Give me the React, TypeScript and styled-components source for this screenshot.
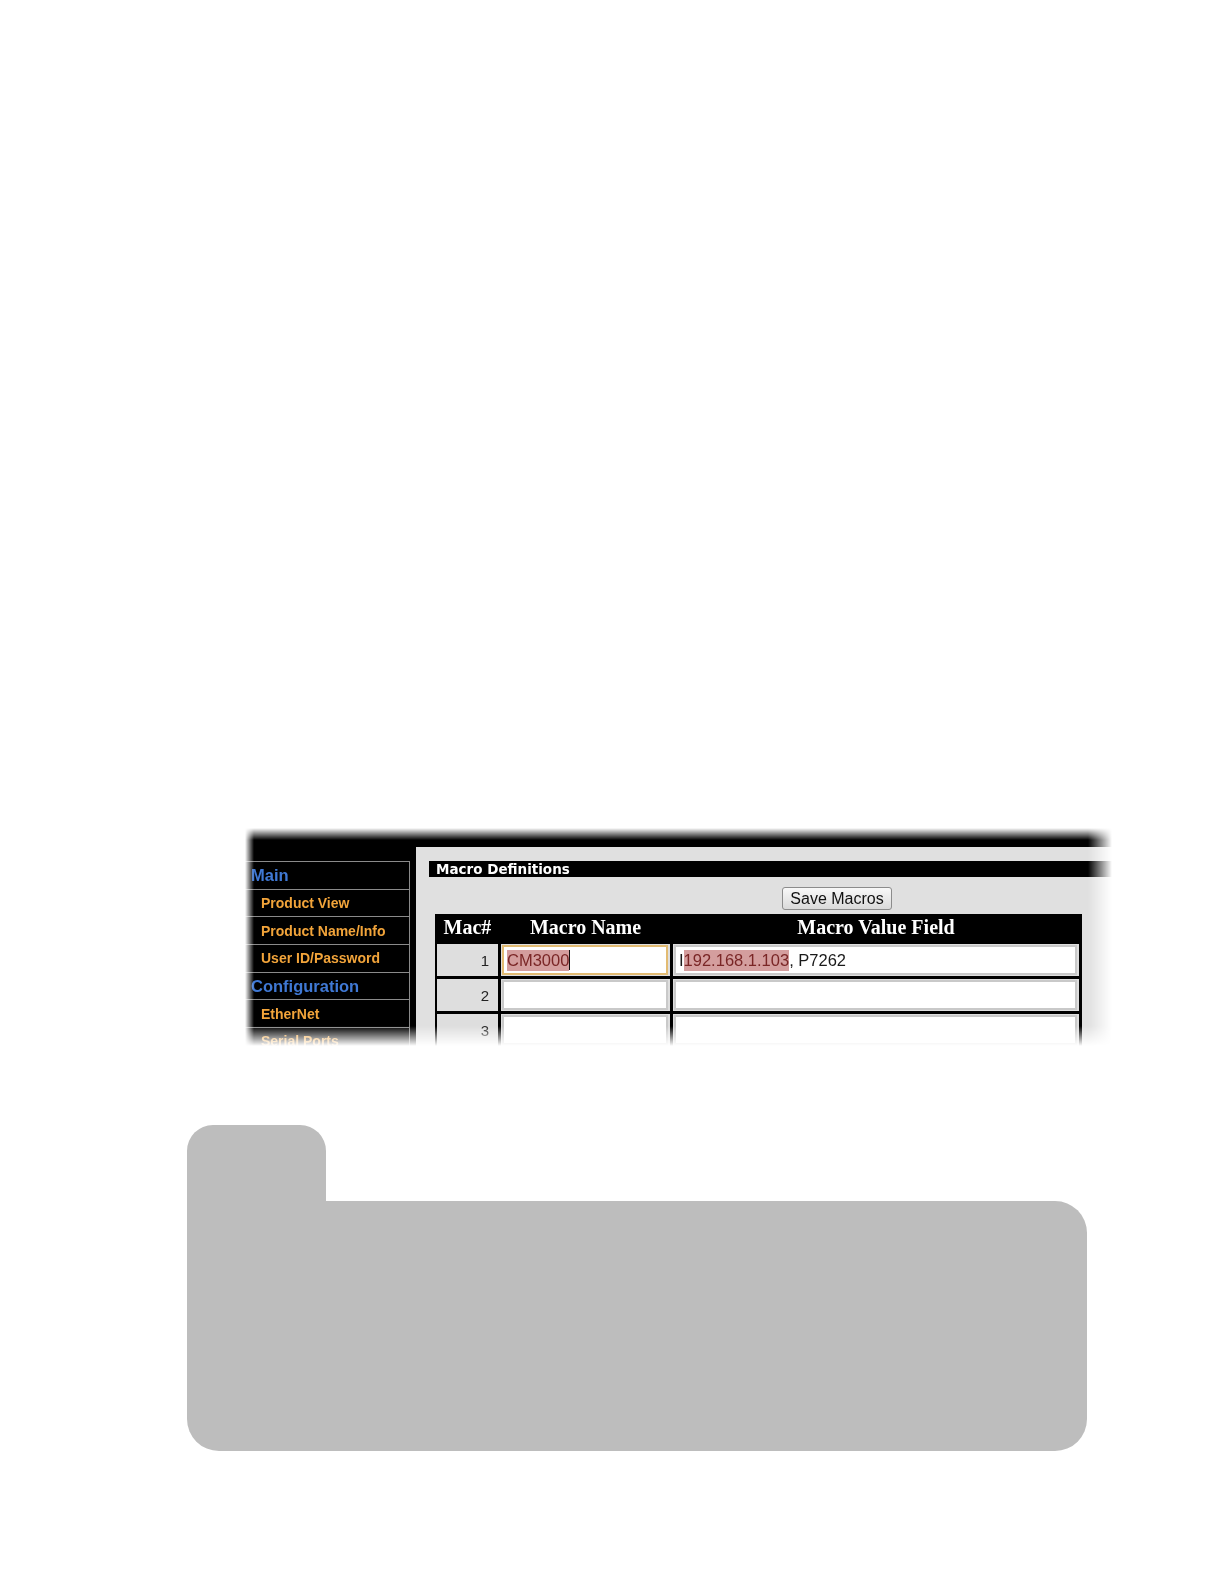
import React from 'react'
import styled, { createGlobalStyle } from 'styled-components'

const GlobalStyle = createGlobalStyle`
  html, body {
    margin: 0;
    padding: 0;
    background: #ffffff;
  }
  body {
    font-family: "Liberation Sans", Arial, sans-serif;
  }
`

const menu = [
  { label: 'Main', header: true },
  { label: 'Product View' },
  { label: 'Product Name/Info' },
  { label: 'User ID/Password' },
  { label: 'Configuration', header: true },
  { label: 'EtherNet' },
  { label: 'Serial Ports' },
]

const fadeX = 'linear-gradient(to right, transparent 0, #000 9px, #000 calc(100% - 24px), transparent 100%)'
const fadeY = 'linear-gradient(to bottom, transparent 0, #000 12px, #000 calc(100% - 20px), transparent 100%)'

const Page = styled.div`
  width: 1224px;
  height: 1584px;
  display: flex;
  flex-direction: column;
  padding-top: 828px;
  box-sizing: border-box;
`

const Shot = styled.div`
  margin-left: 245px;
  width: 867px;
  height: 218px;
  overflow: hidden;
  display: grid;
  grid-template-columns: 171px 1fr;
  grid-template-rows: 19px 1fr;
  background: #000;
  -webkit-mask-image: ${fadeX}, ${fadeY};
  -webkit-mask-composite: source-in;
  mask-image: ${fadeX}, ${fadeY};
  mask-composite: intersect;
`

const TopBar = styled.div`
  grid-column: 1 / 3;
  background: #000;
`

const Sidebar = styled.nav`
  background: #000;
  padding-top: 14px;
`

const MenuItem = styled.div<{ $header?: boolean }>`
  width: 165px;
  height: 27.7px;
  box-sizing: border-box;
  border-top: 1px solid #8a8a8a;
  border-right: 1px solid #8a8a8a;
  display: flex;
  align-items: center;
  padding-left: ${(p) => (p.$header ? '6px' : '16px')};
  font-family: "Liberation Sans", Arial, sans-serif;
  font-weight: bold;
  font-size: ${(p) => (p.$header ? '16.5px' : '14px')};
  color: ${(p) => (p.$header ? '#3f78d4' : '#f2a43a')};
  white-space: nowrap;
`

const Content = styled.main`
  background: #e0e0e0;
  padding: 14px 0 0 13px;
  display: flex;
  flex-direction: column;
`

const SectionBar = styled.div`
  height: 16px;
  background: #000;
  color: #fff;
  font-family: "DejaVu Sans", Verdana, sans-serif;
  font-weight: bold;
  font-size: 13.5px;
  line-height: 16px;
  padding-left: 7px;
  white-space: nowrap;
`

const ButtonRow = styled.div`
  display: flex;
  padding: 10px 0 4px 353px;
`

const SaveButton = styled.button`
  width: 110px;
  height: 23px;
  padding: 0;
  font-family: "Liberation Sans", Arial, sans-serif;
  font-size: 16px;
  color: #111;
  background: linear-gradient(#f8f8f8, #dadada);
  border: 1px solid #8c8c8c;
  border-radius: 3px;
`

const Table = styled.div`
  margin-left: 6px;
  width: 647px;
  display: grid;
  grid-template-columns: 61px 169px 1fr;
  column-gap: 3px;
  row-gap: 3px;
  background: #000;
  padding: 0 3px 3px 2px;
  box-sizing: border-box;
`

const HeadCell = styled.div`
  height: 27px;
  display: flex;
  align-items: center;
  justify-content: center;
  font-family: "Liberation Serif", "Times New Roman", serif;
  font-weight: bold;
  font-size: 20px;
  color: #fff;
`

const NumCell = styled.div`
  height: 32px;
  background: #dedede;
  display: flex;
  align-items: center;
  justify-content: flex-end;
  padding-right: 9px;
  font-size: 15px;
  color: #222;
`

const InputCell = styled.div`
  height: 32px;
  background: #dedede;
  padding: 1px 2px 1px 1px;
  box-sizing: border-box;
  display: flex;
`

const Field = styled.div<{ $focused?: boolean }>`
  flex: 1;
  background: #fff;
  border: 2px solid ${(p) => (p.$focused ? '#e2bb72' : '#c9c9c9')};
  box-sizing: border-box;
  display: flex;
  align-items: center;
  padding-left: 3px;
  font-family: "Liberation Sans", Arial, sans-serif;
  font-size: 16.5px;
  color: #1a1a1a;
  white-space: pre;
`

const Selected = styled.span`
  background: #d49e9e;
  color: #7a2626;
  line-height: 21px;
`

const Caret = styled.span`
  display: inline-block;
  width: 1px;
  height: 20px;
  background: #111;
`

const Shape = styled.div`
  margin-top: 79px;
  margin-left: 187px;
  display: flex;
  flex-direction: column;
`

const Tab = styled.div`
  width: 139px;
  height: 76px;
  background: #bdbdbd;
  border-radius: 26px 26px 0 0;
`

const Body = styled.div`
  width: 900px;
  height: 250px;
  background: #bdbdbd;
  border-radius: 0 32px 32px 32px;
`

export default function App() {
  return (
    <>
      <GlobalStyle />
      <Page>
        <Shot>
          <TopBar />
          <Sidebar>
            {menu.map((m) => (
              <MenuItem key={m.label} $header={m.header}>
                {m.label}
              </MenuItem>
            ))}
          </Sidebar>
          <Content>
            <SectionBar>Macro Definitions</SectionBar>
            <ButtonRow>
              <SaveButton>Save Macros</SaveButton>
            </ButtonRow>
            <Table>
              <HeadCell>Mac#</HeadCell>
              <HeadCell>Macro Name</HeadCell>
              <HeadCell>Macro Value Field</HeadCell>

              <NumCell>1</NumCell>
              <InputCell>
                <Field $focused>
                  <Selected>CM3000</Selected>
                  <Caret />
                </Field>
              </InputCell>
              <InputCell>
                <Field>
                  I<Selected>192.168.1.103</Selected>, P7262
                </Field>
              </InputCell>

              {[2, 3].map((n) => (
                <React.Fragment key={n}>
                  <NumCell>{n}</NumCell>
                  <InputCell>
                    <Field />
                  </InputCell>
                  <InputCell>
                    <Field />
                  </InputCell>
                </React.Fragment>
              ))}
            </Table>
          </Content>
        </Shot>
        <Shape>
          <Tab />
          <Body />
        </Shape>
      </Page>
    </>
  )
}
